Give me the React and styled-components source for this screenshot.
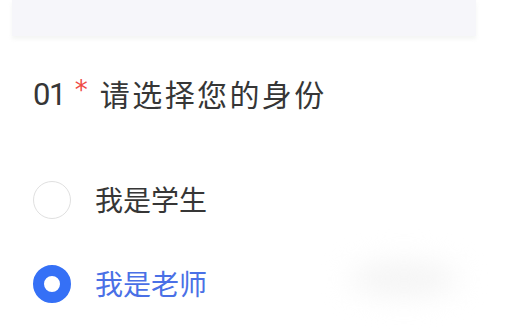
import React from 'react';
import styled, { createGlobalStyle } from 'styled-components';

const Global = createGlobalStyle`
  html, body { margin: 0; padding: 0; background: #fff; }
  body { font-family: "Noto Sans", "Noto Sans CJK SC", sans-serif; }
`;

const Page = styled.div`
  position: relative;
  width: 530px;
  height: 336px;
  overflow: hidden;
  background: #fff;
`;

const TopBar = styled.div`
  margin: 0 54px 0 12px;
  height: 36px;
  background: #f6f6fa;
  box-shadow: 0 3px 4px rgba(240, 242, 240, 0.8);
`;

const Question = styled.div`
  display: flex;
  align-items: center;
  margin: 39px 0 0 33px;
  height: 40px;
  color: #363636;
`;

const Num = styled.span`
  font-family: "Roboto", "Noto Sans", sans-serif;
  font-size: 31px;
  letter-spacing: -1.5px;
  line-height: 40px;
`;

const Star = styled.span`
  align-self: flex-start;
  color: #ef4a44;
  font-family: "DejaVu Sans", sans-serif;
  font-size: 26px;
  line-height: 26px;
  margin: 2px 12px 0 10px;
`;

const Title = styled.span`
  font-size: 30px;
  letter-spacing: 2.4px;
  line-height: 40px;
`;

const Options = styled.div`
  display: flex;
  flex-direction: column;
  gap: 46px;
  margin: 66px 0 0 33px;
`;

const Option = styled.label`
  display: flex;
  align-items: center;
  gap: 24px;
  font-size: 28px;
  line-height: 37px;
  color: ${p => (p.checked ? '#4a70e6' : '#363636')};
`;

const Radio = styled.span`
  box-sizing: border-box;
  flex: none;
  width: 38px;
  height: 38px;
  border-radius: 50%;
  background: #fff;
  border: ${p => (p.checked ? '11px solid #3570f6' : '1.5px solid #e0e0e0')};
`;

const Smudge = styled.div`
  position: absolute;
  left: 350px;
  top: 262px;
  width: 108px;
  height: 34px;
  border-radius: 50%;
  background: #f4f4f4;
  filter: blur(14px);
`;

export default function App() {
  return (
    <Page>
      <Global />
      <TopBar />
      <Question>
        <Num>01</Num>
        <Star>*</Star>
        <Title>请选择您的身份</Title>
      </Question>
      <Options>
        <Option>
          <Radio />
          我是学生
        </Option>
        <Option checked>
          <Radio checked />
          我是老师
        </Option>
      </Options>
      <Smudge />
    </Page>
  );
}
